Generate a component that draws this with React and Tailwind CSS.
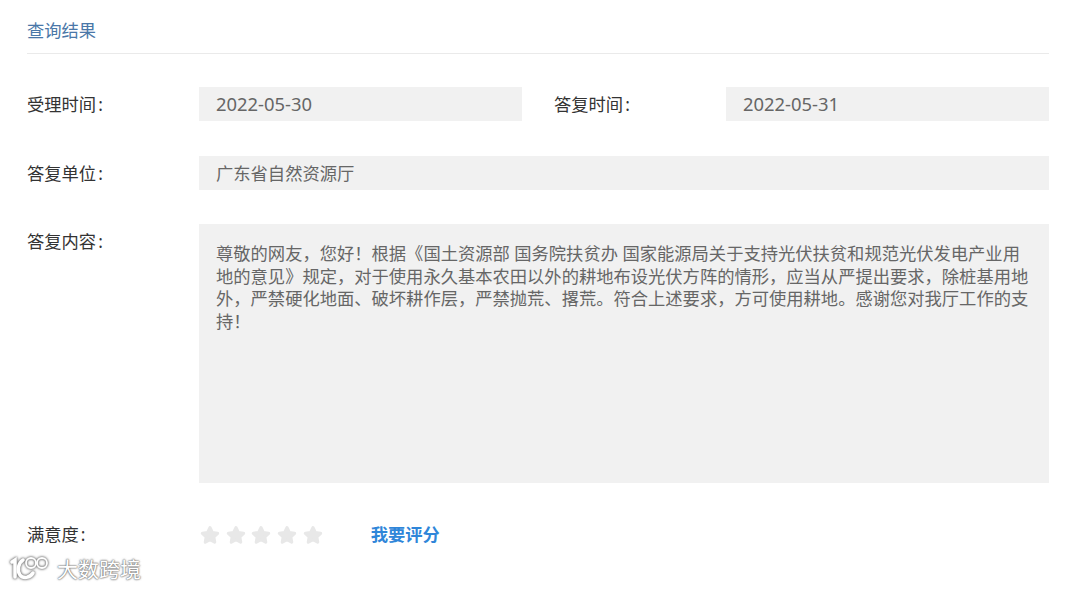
const font = { fontFamily: '"Noto Sans", "Noto Sans CJK SC", sans-serif' };

const Star = () => (
  <svg viewBox="0 0 24 24" className="h-[22px] w-[22px]" fill="#e8e8e8" stroke="#e8e8e8" strokeWidth="3.5" strokeLinejoin="round">
    <path d="M12 4l2.5 5.3 5.8.8-4.2 4 1 5.7L12 17.1l-5.1 2.7 1-5.7-4.2-4 5.8-.8z" />
  </svg>
);

const Label = ({ children }) => (
  <div className="h-[34px] w-[172px] flex-none text-[17.3px] leading-[36px] text-[#333]">
    {children}
    <span className="ml-[2px]">:</span>
  </div>
);

const Field = ({ children, date }) => (
  <div className={date ? "h-[34px] flex-1 bg-[#f1f1f1] px-[17px] text-[18.4px] leading-[34px] text-[#666]" : "h-[34px] flex-1 bg-[#f1f1f1] px-[17px] text-[17.3px] leading-[36px] text-[#666]"}>
    {children}
  </div>
);

export default function App() {
  return (
    <div className="relative h-[589px] overflow-hidden bg-white pl-[27px] pr-[31px] pt-[18px]" style={font}>
      <div className="h-[36px] border-b border-[#eaeaea] text-[17.3px] leading-[26px] text-[#4a77a8]">查询结果</div>

      <div className="mt-[33px] flex gap-[32px]">
        <div className="flex flex-1">
          <Label>受理时间</Label>
          <Field date>2022-05-30</Field>
        </div>
        <div className="flex flex-1">
          <Label>答复时间</Label>
          <Field date>2022-05-31</Field>
        </div>
      </div>

      <div className="mt-[35px] flex">
        <Label>答复单位</Label>
        <Field>广东省自然资源厅</Field>
      </div>

      <div className="mt-[34px] flex">
        <Label>答复内容</Label>
        <div className="h-[259px] flex-1 bg-[#f1f1f1] px-[17px] pt-[19px] text-[17.3px] leading-[22.5px] text-[#666]">
          尊敬的网友，您好！根据《国土资源部 国务院扶贫办 国家能源局关于支持光伏扶贫和规范光伏发电产业用地的意见》规定，对于使用永久基本农田以外的耕地布设光伏方阵的情形，应当从严提出要求，除桩基用地外，严禁硬化地面、破坏耕作层，严禁抛荒、撂荒。符合上述要求，方可使用耕地。感谢您对我厅工作的支持！
        </div>
      </div>

      <div className="mt-[35px] flex items-center">
        <div className="h-[34px] w-[172px] flex-none text-[17.3px] leading-[34px] text-[#333]">
          满意度<span className="ml-[2px]">:</span>
        </div>
        <div className="flex gap-[3.7px]">
          <Star />
          <Star />
          <Star />
          <Star />
          <Star />
        </div>
        <a className="ml-[47px] text-[17.3px] font-bold leading-[34px] text-[#2f86d9]">我要评分</a>
      </div>

      <div className="absolute left-[10px] top-[554px] flex h-[30px] items-center text-white">
        <svg width="47" height="30" viewBox="0 0 47 30" fill="none" stroke="#fff" strokeLinecap="round" className="[filter:drop-shadow(0_0_1px_#777)_drop-shadow(0_0_1px_#999)]">
          <path d="M2 8 L5 6 V23" strokeWidth="3.5" />
          <path d="M13 6 C8 9 7 17 10 21 C13 25 20 24 23 19" strokeWidth="3.5" />
          <circle cx="21" cy="9" r="5" strokeWidth="1.8" />
          <circle cx="32" cy="9" r="5" strokeWidth="1.8" />
        </svg>
        <span className="text-[21px] leading-[30px] [text-shadow:0_0_2px_#777,0_0_2px_#777,0_0_1px_#999]">大数跨境</span>
      </div>
    </div>
  );
}
